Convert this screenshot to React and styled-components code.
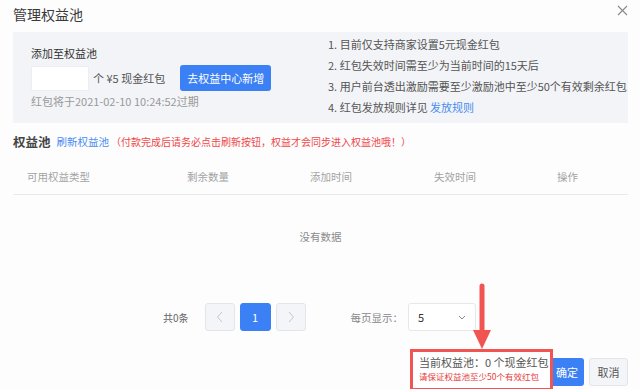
import React from "react";
import styled, { createGlobalStyle } from "styled-components";

const GlobalStyle = createGlobalStyle`
  html, body {
    margin: 0;
    padding: 0;
    background: #fdfdfe;
  }
  * {
    box-sizing: border-box;
  }
`;

const Dialog = styled.div`
  position: relative;
  width: 640px;
  height: 389px;
  overflow: hidden;
  padding: 0 12px 0 13px;
  background: #fdfdfe;
  font-family: "Noto Sans CJK SC", "Noto Sans", sans-serif;
  color: #333;
  font-size: 11px;
`;

const Header = styled.div`
  display: flex;
  justify-content: space-between;
  align-items: flex-start;
  height: 32px;
`;

const Title = styled.h1`
  margin: 0;
  padding-top: 3px;
  font-size: 14px;
  line-height: 22px;
  font-weight: 400;
  color: #3a3a3a;
`;

const Close = styled.button`
  border: none;
  background: none;
  padding: 0;
  margin-top: 5px;
  width: 11px;
  height: 11px;
  display: flex;
`;

const InfoBox = styled.div`
  display: grid;
  grid-template-columns: 297px 1fr;
  height: 91px;
  padding-left: 18px;
  background: #f2f4f7;
`;

const AddColumn = styled.div`
  display: flex;
  flex-direction: column;
  padding-top: 12px;
`;

const Label = styled.div`
  line-height: 18px;
  color: #333;
`;

const AddRow = styled.div`
  display: flex;
  align-items: center;
  margin-top: 3px;
`;

const Input = styled.div`
  width: 58px;
  height: 25px;
  background: #fff;
  border: 1px solid #eceef2;
  border-radius: 2px;
`;

const Unit = styled.span`
  margin-left: 4px;
  color: #555;
`;

const PrimaryButton = styled.button`
  height: ${(p) => p.$h || 26}px;
  padding: 0 ${(p) => p.$px || 8}px;
  margin-left: ${(p) => p.$ml || 0}px;
  margin-top: ${(p) => p.$mt || 0}px;
  border: none;
  border-radius: 3px;
  background: #3c80f6;
  color: #fff;
  font-family: inherit;
  font-size: 11px;
  white-space: nowrap;
`;

const Expire = styled.div`
  line-height: 18px;
  margin-top: 1px;
  color: #999;
`;

const RuleList = styled.ol`
  margin: 0;
  padding: 2px 0 0 0;
  list-style: none;
`;

const Rule = styled.li`
  line-height: 21px;
  font-size: 11px;
  color: #555;
  white-space: nowrap;
`;

const Link = styled.a`
  color: #4a8cf0;
  text-decoration: none;
`;

const SectionTitle = styled.div`
  display: flex;
  align-items: center;
  margin-top: 10px;
  line-height: 18px;
  white-space: nowrap;
`;

const SectionName = styled.span`
  font-size: 12.5px;
  font-weight: 700;
  color: #444;
`;

const RefreshLink = styled(Link)`
  margin-left: 6px;
  font-size: 10.5px;
`;

const Warning = styled.span`
  margin-left: 2px;
  font-size: 10px;
  color: #f04646;
`;

const TableHead = styled.div`
  display: grid;
  grid-template-columns: 160px 123px 124px 123px 1fr;
  align-items: center;
  height: 37px;
  margin-top: 7px;
  padding-left: 14px;
  border-bottom: 1px solid #e9eaec;
`;

const HeadCell = styled.div`
  font-size: 10.5px;
  color: #a3a3a3;
`;

const Empty = styled.div`
  display: flex;
  align-items: center;
  justify-content: center;
  height: 82px;
  color: #8c8c8c;
  font-size: 10.5px;
`;

const Pagination = styled.div`
  display: flex;
  align-items: center;
  height: 28px;
  margin-top: 26px;
  padding-left: 150px;
`;

const Total = styled.span`
  font-size: 10px;
  color: #666;
  margin-right: 16px;
`;

const PageButton = styled.button`
  width: ${(p) => (p.$active ? 31 : 30)}px;
  height: 28px;
  margin-right: 5px;
  display: flex;
  align-items: center;
  justify-content: center;
  border: 1px solid ${(p) => (p.$active ? "#3c80f6" : "#e3e5e9")};
  border-radius: 3px;
  background: ${(p) => (p.$active ? "#3c80f6" : "#f4f5f8")};
  color: #fff;
  font-family: inherit;
  font-size: 11px;
  padding: 0;
`;

const PerPage = styled.span`
  margin-left: 40px;
  color: #888;
  font-size: 10.5px;
`;

const Select = styled.div`
  display: flex;
  align-items: center;
  justify-content: space-between;
  width: 68px;
  height: 28px;
  margin-left: 5px;
  padding: 0 9px 0 9px;
  border: 1px solid #e6e7ea;
  border-radius: 3px;
  background: #fff;
  color: #333;
`;

const Footer = styled.div`
  display: flex;
  justify-content: flex-end;
  align-items: flex-start;
  margin-top: 18px;
`;

const Note = styled.div`
  width: 143px;
  height: 42px;
  padding: 3px 0 0 6px;
  border: 3px solid #f15552;
  background: #fff;
  position: relative;
  z-index: 2;
`;

const NoteMain = styled.div`
  font-size: 11px;
  line-height: 15px;
  color: #555;
  white-space: nowrap;
`;

const NoteSub = styled.div`
  font-size: 8.5px;
  line-height: 12px;
  color: #e53c3c;
  white-space: nowrap;
`;

const CancelButton = styled.button`
  height: 28px;
  width: 39px;
  margin-top: 9px;
  margin-left: 5px;
  border: 1px solid #e3e5e9;
  border-radius: 3px;
  background: #f4f5f8;
  color: #555;
  font-family: inherit;
  font-size: 11px;
  padding: 0;
`;

const Arrow = styled.svg`
  position: absolute;
  left: 472px;
  top: 283px;
  z-index: 3;
`;

const Chevron = ({ dir }) => (
  <svg width="8" height="12" viewBox="0 0 8 12">
    <polyline
      points={dir === "left" ? "6,1 1.5,6 6,11" : "2,1 6.5,6 2,11"}
      fill="none"
      stroke="#c3c6cc"
      strokeWidth="1"
    />
  </svg>
);

const rules = [
  "1. 目前仅支持商家设置5元现金红包",
  "2. 红包失效时间需至少为当前时间的15天后",
  "3. 用户前台透出激励需要至少激励池中至少50个有效剩余红包",
];

export default function App() {
  return (
    <>
      <GlobalStyle />
      <Dialog>
        <Header>
          <Title>管理权益池</Title>
          <Close aria-label="关闭">
            <svg width="11" height="11" viewBox="0 0 11 11">
              <path d="M1 1L10 10M10 1L1 10" stroke="#888" strokeWidth="1.1" />
            </svg>
          </Close>
        </Header>

        <InfoBox>
          <AddColumn>
            <Label>添加至权益池</Label>
            <AddRow>
              <Input />
              <Unit>个 ¥5 现金红包</Unit>
              <PrimaryButton $ml={15} $px={7}>去权益中心新增</PrimaryButton>
            </AddRow>
            <Expire>红包将于2021-02-10 10:24:52过期</Expire>
          </AddColumn>
          <RuleList>
            {rules.map((r) => (
              <Rule key={r}>{r}</Rule>
            ))}
            <Rule>
              4. 红包发放规则详见 <Link>发放规则</Link>
            </Rule>
          </RuleList>
        </InfoBox>

        <SectionTitle>
          <SectionName>权益池</SectionName>
          <RefreshLink>刷新权益池</RefreshLink>
          <Warning>（付款完成后请务必点击刷新按钮，权益才会同步进入权益池哦！）</Warning>
        </SectionTitle>

        <TableHead>
          <HeadCell>可用权益类型</HeadCell>
          <HeadCell>剩余数量</HeadCell>
          <HeadCell>添加时间</HeadCell>
          <HeadCell>失效时间</HeadCell>
          <HeadCell>操作</HeadCell>
        </TableHead>
        <Empty>没有数据</Empty>

        <Pagination>
          <Total>共0条</Total>
          <PageButton>
            <Chevron dir="left" />
          </PageButton>
          <PageButton $active>1</PageButton>
          <PageButton>
            <Chevron dir="right" />
          </PageButton>
          <PerPage>每页显示：</PerPage>
          <Select>
            <span>5</span>
            <svg width="8" height="5" viewBox="0 0 8 5">
              <polyline points="1,1 4,4 7,1" fill="none" stroke="#888" strokeWidth="1" />
            </svg>
          </Select>
        </Pagination>

        <Footer>
          <Note>
            <NoteMain>当前权益池：0 个现金红包</NoteMain>
            <NoteSub>请保证权益池至少50个有效红包</NoteSub>
          </Note>
          <PrimaryButton $h={28} $px={6} $mt={9} $ml={-3}>
            确定
          </PrimaryButton>
          <CancelButton>取消</CancelButton>
        </Footer>

        <Arrow width="20" height="68" viewBox="0 0 20 68">
          <line x1="10" y1="3" x2="10" y2="50" stroke="#f15552" strokeWidth="5" strokeLinecap="round" />
          <polygon points="1,47 19,47 10,66" fill="#f15552" />
        </Arrow>
      </Dialog>
    </>
  );
}
